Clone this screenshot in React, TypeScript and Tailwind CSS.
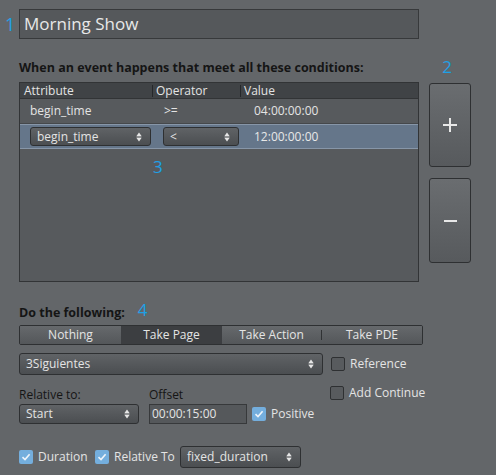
import React from "react";

const font = { fontFamily: '"Open Sans", "Noto Sans", sans-serif' };

function Arrows() {
  return (
    <svg width="6" height="10" viewBox="0 0 6 10" className="shrink-0">
      <path d="M3 0.5 L5.5 4 L0.5 4 Z" fill="#e6e6e6" />
      <rect x="0.5" y="4.6" width="5" height="0.8" fill="#e6e6e6" />
      <path d="M3 9.5 L5.5 6 L0.5 6 Z" fill="#e6e6e6" />
    </svg>
  );
}

function Select({ label, className }: { label: string; className: string }) {
  return (
    <div
      className={
        "flex items-center justify-between rounded-[3px] border border-[#2e3032] bg-gradient-to-b from-[#606366] to-[#4b4e51] pl-[6px] pr-[8px] text-[12px] text-[#e4e4e4] " +
        className
      }
    >
      <span>{label}</span>
      <Arrows />
    </div>
  );
}

function Check({ checked }: { checked: boolean }) {
  if (checked)
    return (
      <div className="flex h-[14px] w-[14px] shrink-0 items-center justify-center rounded-[2px] bg-[#74aedd]">
        <svg width="10" height="10" viewBox="0 0 10 10">
          <path d="M1.5 5.2 L4 7.6 L8.6 2.2" stroke="#eef4fa" strokeWidth="1.6" fill="none" />
        </svg>
      </div>
    );
  return <div className="h-[14px] w-[14px] shrink-0 rounded-[2px] border border-[#2e3032] bg-[#585b5e]" />;
}

export default function App() {
  return (
    <div className="relative h-[475px] w-[496px] overflow-hidden bg-[#636669]" style={font}>
      {/* title row */}
      <div className="flex items-center pt-[9px]">
        <div className="w-[19px] pl-[5px] text-[18px] leading-none text-[#1ea0e6]">1</div>
        <div className="flex h-[30px] w-[400px] items-center border border-[#37393b] bg-[#55585b] pl-[4px] text-[17px] text-[#e8e8e8]">
          Morning Show
        </div>
      </div>

      {/* conditions */}
      <div className="mt-[17px] flex pl-[19px]">
        <div className="w-[400px]">
          <div className="h-[26px] pt-[4px] text-[12.5px] font-bold leading-[16px] text-[#151515]">
            When an event happens that meet all these conditions:
          </div>
          <div className="relative h-[200px] border border-[#323436] bg-[#575a5d]">
            <div className="flex h-[16px] items-center border-b border-[#323436] bg-[#404346] text-[12px] leading-none text-[#e4e4e4]">
              <div className="w-[133px] border-r border-[#25272a] pl-[4px]">Attribute</div>
              <div className="w-[88px] border-r border-[#25272a] pl-[3px]">Operator</div>
              <div className="flex-1 pl-[3px]">Value</div>
            </div>
            <div className="flex h-[25px] items-center border-b border-[#45484b] text-[12px] text-[#e4e4e4]">
              <div className="w-[134px] pl-[10px]">begin_time</div>
              <div className="w-[100px] pl-[10px]">&gt;=</div>
              <div className="flex-1">04:00:00:00</div>
            </div>
            <div className="flex h-[25px] items-center border-y border-[#8796a8] bg-[#65768a] text-[12px] text-[#e8e8e8]">
              <div className="w-[143px] pl-[10px]">
                <Select label="begin_time" className="h-[19px] w-[121px]" />
              </div>
              <div className="w-[91px]">
                <Select label="<" className="h-[19px] w-[76px]" />
              </div>
              <div className="flex-1">12:00:00:00</div>
            </div>
            <div className="absolute left-[133px] top-[75px] text-[17px] leading-none text-[#1ea0e6]">3</div>
          </div>
        </div>
        <div className="ml-[10px] flex w-[42px] flex-col items-center">
          <div className="-ml-[6px] h-[27px] pt-[2px] text-[17px] leading-none text-[#1ea0e6]">2</div>
          <div className="flex h-[84px] w-[42px] items-center justify-center rounded-[3px] border border-[#2e3032] bg-gradient-to-b from-[#6a6d70] to-[#575a5d]">
            <svg width="14" height="14" viewBox="0 0 14 14">
              <rect x="6" y="0" width="2" height="14" fill="#e8e8e8" />
              <rect x="0" y="6" width="14" height="2" fill="#e8e8e8" />
            </svg>
          </div>
          <div className="mt-[11px] flex h-[85px] w-[42px] items-center justify-center rounded-[3px] border border-[#2e3032] bg-gradient-to-b from-[#6a6d70] to-[#575a5d]">
            <svg width="13" height="2" viewBox="0 0 13 2">
              <rect x="0" y="0" width="13" height="2" fill="#e8e8e8" />
            </svg>
          </div>
        </div>
      </div>

      {/* do the following */}
      <div className="mt-[17px] pl-[19px]">
        <div className="flex h-[22px] items-end">
          <div className="text-[12.5px] font-bold leading-[16px] text-[#151515]">Do the following:</div>
          <div className="mb-[3px] ml-[13px] text-[17px] leading-none text-[#1ea0e6]">4</div>
        </div>
        <div className="mt-[4px] flex h-[20px] w-[404px] overflow-hidden rounded-[2px] border border-[#2e3032] text-[12px] text-[#e4e4e4]">
          <div className="flex w-[101px] items-center justify-center bg-gradient-to-b from-[#66696c] to-[#54575a]">Nothing</div>
          <div className="flex w-[101px] items-center justify-center bg-[#3c3e41]">Take Page</div>
          <div className="flex w-[100px] items-center justify-center bg-gradient-to-b from-[#66696c] to-[#54575a]">
            <span className="flex-1 text-center">Take Action</span>
            <span className="h-[10px] w-px bg-[#303234]" />
          </div>
          <div className="flex flex-1 items-center justify-center bg-gradient-to-b from-[#66696c] to-[#54575a]">Take PDE</div>
        </div>

        <div className="mt-[8px] flex items-center">
          <Select label="3Siguientes" className="h-[22px] w-[304px]" />
          <div className="ml-[8px] flex items-center gap-[5px] text-[12px] text-[#e4e4e4]">
            <Check checked={false} />
            <span>Reference</span>
          </div>
        </div>

        <div className="mt-[11px] flex">
          <div className="w-[130px]">
            <div className="h-[18px] text-[12px] leading-[18px] text-[#151515]">Relative to:</div>
            <Select label="Start" className="h-[20px] w-[120px]" />
          </div>
          <div className="w-[181px]">
            <div className="h-[18px] text-[12px] leading-[18px] text-[#151515]">Offset</div>
            <div className="flex items-center">
              <div className="flex h-[20px] w-[98px] items-center border border-[#37393b] bg-[#55585b] pl-[2px] text-[12px] text-[#e4e4e4]">
                00:00:15:00
              </div>
              <div className="ml-[5px] flex items-center gap-[5px] text-[12px] text-[#e4e4e4]">
                <Check checked={true} />
                <span>Positive</span>
              </div>
            </div>
          </div>
          <div className="-mt-[2px] flex h-[18px] items-center gap-[5px] text-[12px] text-[#e4e4e4]">
            <Check checked={false} />
            <span>Add Continue</span>
          </div>
        </div>

        <div className="mt-[22px] flex items-center text-[12px] text-[#e4e4e4]">
          <Check checked={true} />
          <span className="ml-[5px] w-[57px]">Duration</span>
          <Check checked={true} />
          <span className="ml-[5px] w-[66px]">Relative To</span>
          <Select label="fixed_duration" className="h-[22px] w-[121px]" />
        </div>
      </div>
    </div>
  );
}
